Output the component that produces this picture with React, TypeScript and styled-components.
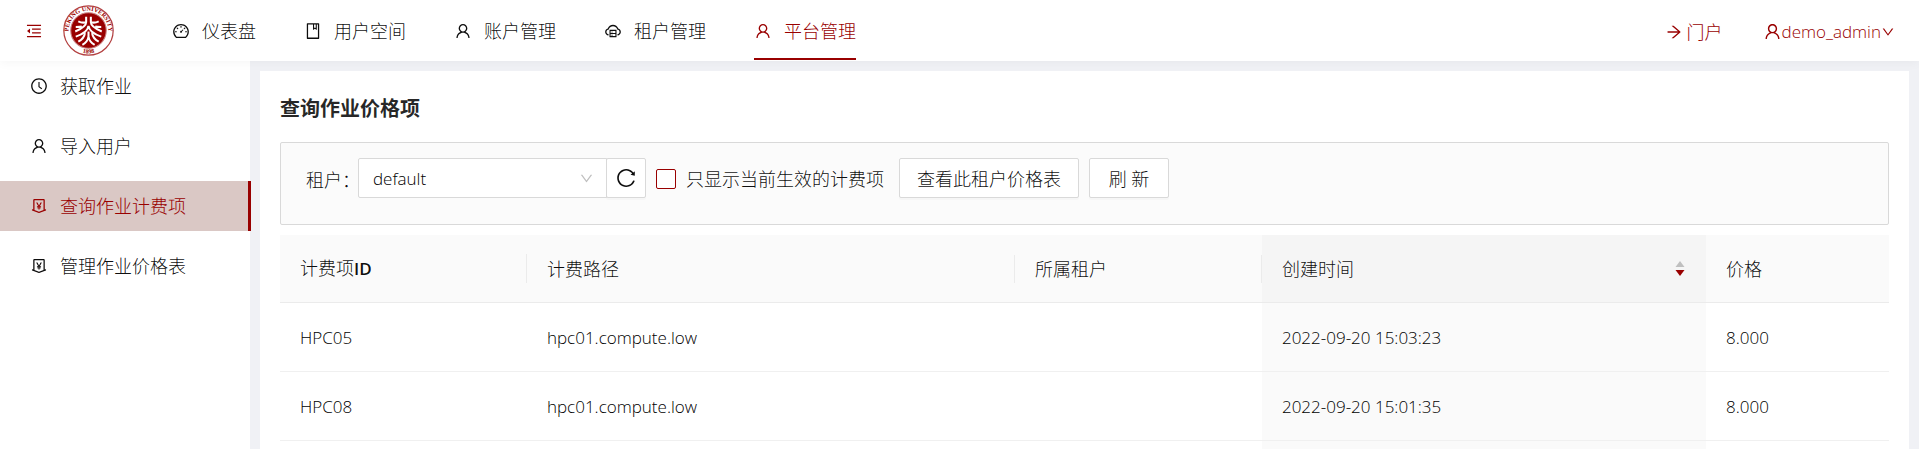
import React from 'react';
import styled, { createGlobalStyle, css } from 'styled-components';
import {
  AiOutlineMenuFold,
  AiOutlineDashboard,
  AiOutlineBook,
  AiOutlineUser,
  AiOutlineCloudServer,
  AiOutlineArrowRight,
  AiOutlineDown,
  AiOutlineClockCircle,
  AiOutlineReload,
  AiOutlineMoneyCollect,
} from 'react-icons/ai';

const brand = '#990000';
const ink = 'rgba(0, 0, 0, 0.95)';
const line = '#d9d9d9';

const GlobalStyle = createGlobalStyle`
  *, *::before, *::after { box-sizing: border-box; }
  body {
    margin: 0;
    color: ${ink};
    background: #f0f1f5;
    font-family: "Open Sans", "Noto Sans CJK SC", sans-serif;
    font-size: 18px;
    font-weight: 300;
    line-height: 28px;
  }
  button, select, input { font: inherit; color: inherit; margin: 0; }
  a { color: inherit; text-decoration: none; }
  svg { flex: none; display: block; }
`;

const Page = styled.div`
  display: flex;
  flex-direction: column;
  height: 100vh;
  overflow: hidden;
`;

const Header = styled.header`
  position: relative;
  z-index: 1;
  display: flex;
  flex: none;
  height: 61px;
  padding: 0 24px 0 25px;
  background: #fff;
  box-shadow: 0 2px 10px rgba(0, 0, 0, 0.04);
`;

const FoldButton = styled.button`
  display: flex;
  align-items: center;
  padding: 0;
  border: 0;
  background: none;
  color: ${brand};
`;

const LogoLink = styled.a`
  display: flex;
  align-items: center;
  margin: 0 34px 0 20px;
`;

const Nav = styled.nav`
  display: flex;
  flex: 1;
`;

const NavItem = styled.a<{ $active?: boolean }>`
  display: flex;
  align-items: center;
  gap: 12px;
  margin: 0 24px;
  padding-top: 4px;
  height: 60px;
  border-bottom: 2px solid ${(p) => (p.$active ? brand : 'transparent')};
  color: ${(p) => (p.$active ? brand : ink)};
`;

const HeaderLinks = styled.div`
  display: flex;
  align-items: center;
  gap: 40px;
  padding-top: 2px;
  color: ${brand};
`;

const PortalLink = styled.a`
  display: flex;
  align-items: center;
  gap: 4px;
`;

const UserButton = styled.button`
  display: flex;
  align-items: center;
  padding: 0;
  border: 0;
  background: none;
  color: ${brand};
  font-size: 17px;
`;

const Body = styled.div`
  display: flex;
  flex: 1;
  min-height: 0;
`;

const Sidebar = styled.aside`
  display: flex;
  flex-direction: column;
  flex: none;
  gap: 10px;
  width: 250px;
  background: #fff;
`;

const SideItem = styled.a<{ $active?: boolean }>`
  display: flex;
  align-items: center;
  gap: 12px;
  height: 50px;
  padding-left: 30px;
  ${(p) =>
    p.$active &&
    css`
      margin-right: -1px;
      color: ${brand};
      background: #dac8c5;
      border-right: 3px solid ${brand};
    `}
`;

const Card = styled.main`
  flex: 1;
  min-width: 0;
  margin: 10px 10px 0;
  padding: 20px 20px 0;
  background: #fff;
  overflow: hidden;
`;

const Title = styled.h1`
  margin: 0 0 16px;
  color: rgba(0, 0, 0, 0.85);
  font-size: 20px;
  font-weight: 700;
  line-height: 35px;
`;

const Filters = styled.form`
  display: flex;
  align-items: flex-start;
  height: 83px;
  margin-bottom: 10px;
  padding: 15px 25px;
  border: 1px solid ${line};
  border-radius: 2px;
  background: #fbfbfb;
`;

const FieldLabel = styled.label`
  width: 52px;
  padding-top: 2px;
  line-height: 40px;
  white-space: nowrap;
`;

const SelectWrap = styled.div`
  display: grid;
  align-items: center;
  width: 249px;
  margin-right: -1px;
  > * { grid-area: 1 / 1; }
  > svg { justify-self: end; margin-right: 13px; color: #bfbfbf; pointer-events: none; }
`;

const Select = styled.select`
  width: 100%;
  height: 40px;
  padding: 2px 14px 0;
  border: 1px solid ${line};
  border-radius: 2px 0 0 2px;
  background: #fff;
  color: #000;
  appearance: none;
  font-size: 17px;
`;

const Button = styled.button<{ $icon?: boolean }>`
  display: flex;
  align-items: center;
  justify-content: center;
  height: 40px;
  min-width: ${(p) => (p.$icon ? '40px' : '80px')};
  padding: ${(p) => (p.$icon ? '0' : '1px 17px 0')};
  border: 1px solid ${line};
  border-radius: 2px;
  background: #fff;
  box-shadow: 0 2px 0 rgba(0, 0, 0, 0.02);
  white-space: nowrap;
`;

const CheckLabel = styled.label`
  display: flex;
  align-items: center;
  gap: 10px;
  height: 40px;
  padding-top: 2px;
  margin: 0 15px 0 10px;
  white-space: nowrap;
`;

const Checkbox = styled.input`
  appearance: none;
  width: 20px;
  height: 20px;
  border: 1px solid ${brand};
  border-radius: 2px;
  background: #fff;
`;

const Actions = styled.div`
  display: flex;
  gap: 10px;
`;

const Table = styled.table`
  width: 100%;
  table-layout: fixed;
  border-collapse: separate;
  border-spacing: 0;
`;

const Col = styled.col<{ $share: number }>`
  width: ${(p) => p.$share}%;
`;

const Th = styled.th<{ $sorted?: boolean }>`
  height: 68px;
  padding: 0 0 0 20px;
  text-align: left;
  font-weight: inherit;
  border-bottom: 1px solid #ebebeb;
  background: ${(p) => (p.$sorted ? '#f5f5f5' : '#fafafa')};
`;

const HeadCell = styled.div<{ $rule?: boolean }>`
  display: flex;
  align-items: center;
  justify-content: space-between;
  padding-right: 20px;
  border-right: 1px solid ${(p) => (p.$rule ? '#ebebeb' : 'transparent')};
`;

const Latin = styled.span`
  font-size: 17px;
  font-weight: 600;
`;

const Td = styled.td<{ $sorted?: boolean }>`
  height: 69px;
  padding: 2px 20px 0;
  color: #000;
  font-size: 17px;
  border-bottom: 1px solid #f0f0f0;
  background: ${(p) => (p.$sorted ? '#fafafa' : '#fff')};
`;

const Logo = () => (
  <svg width="51" height="51" viewBox="0 0 50 50" role="img" aria-label="PKU">
    <defs>
      <path id="ringTop" d="M9.2 36.5 A19.5 19.5 0 1 1 40.8 36.5" />
      <path id="ringBottom" d="M8 40 A23 23 0 0 0 42 40" />
    </defs>
    <circle cx="25" cy="25" r="24.2" fill="#fff" stroke="#b34040" strokeWidth="1.2" />
    <circle cx="25" cy="25" r="17.4" fill="#990000" stroke="#c98080" strokeWidth="1" />
    <g
      fill="#990000"
      fontFamily="Liberation Serif, serif"
      fontWeight="700"
      fontSize="6"
      textAnchor="middle"
    >
      <text>
        <textPath href="#ringTop" startOffset="50%">PEKING UNIVERSITY</textPath>
      </text>
      <text>
        <textPath href="#ringBottom" startOffset="50%">1898</textPath>
      </text>
    </g>
    <g fill="none" stroke="#fff" strokeWidth="2" strokeLinejoin="round">
      <path d="M22.7 11.5 V17 C22.7 20 18 23.5 12 26 M15 16 C18 17.5 20 17.5 22 17 M12.5 21.5 C15 21.5 17 21.5 18.5 21" />
      <path d="M27.3 11.5 V17 C27.3 20 32 23.5 38 26 M35 16 C32 17.5 30 17.5 28 17 M37.5 21.5 C35 21.5 33 21.5 31.5 21" />
      <path d="M25 20.5 C24.5 24.5 20 28.5 12.5 31 M25 20.5 C25.5 24.5 30 28.5 37.5 31" />
      <path d="M21.5 27.5 C21 31 18.5 34 15 36 M28.5 27.5 C29 31 31.5 34 35 36" />
      <path d="M25 26 V31 C24.5 34.5 22.5 37 19 39 M25 31 C25.5 34.5 27.5 37 31 39" />
    </g>
  </svg>
);

const Sorter = () => (
  <svg width="10" height="16" viewBox="0 0 10 16" aria-hidden="true">
    <path d="M5 0 L9.5 6 H0.5 Z" fill="#bfbfbf" />
    <path d="M5 15 L9.5 9 H0.5 Z" fill={brand} />
  </svg>
);

const navItems = [
  { label: '仪表盘', Icon: AiOutlineDashboard },
  { label: '用户空间', Icon: AiOutlineBook },
  { label: '账户管理', Icon: AiOutlineUser },
  { label: '租户管理', Icon: AiOutlineCloudServer },
  { label: '平台管理', Icon: AiOutlineUser, active: true },
];

const sideItems = [
  { label: '获取作业', Icon: AiOutlineClockCircle },
  { label: '导入用户', Icon: AiOutlineUser },
  { label: '查询作业计费项', Icon: AiOutlineMoneyCollect, active: true },
  { label: '管理作业价格表', Icon: AiOutlineMoneyCollect },
];

const rows = [
  ['HPC05', 'hpc01.compute.low', '', '2022-09-20 15:03:23', '8.000'],
  ['HPC08', 'hpc01.compute.low', '', '2022-09-20 15:01:35', '8.000'],
  ['', '', '', '', ''],
];

const shares = [15.35, 30.33, 15.35, 27.6, 11.37];

export default function App() {
  return (
    <>
      <GlobalStyle />
      <Page>
        <Header>
          <FoldButton type="button" aria-label="收起菜单">
            <AiOutlineMenuFold size={18} />
          </FoldButton>
          <LogoLink href="#">
            <Logo />
          </LogoLink>
          <Nav>
            {navItems.map(({ label, Icon, active }) => (
              <NavItem key={label} href="#" $active={active}>
                <Icon size={18} />
                {label}
              </NavItem>
            ))}
          </Nav>
          <HeaderLinks>
            <PortalLink href="#">
              <AiOutlineArrowRight size={18} />
              门户
            </PortalLink>
            <UserButton type="button">
              <AiOutlineUser size={19} />
              demo_admin
              <AiOutlineDown size={14} />
            </UserButton>
          </HeaderLinks>
        </Header>
        <Body>
          <Sidebar>
            {sideItems.map(({ label, Icon, active }) => (
              <SideItem key={label} href="#" $active={active}>
                <Icon size={18} />
                {label}
              </SideItem>
            ))}
          </Sidebar>
          <Card>
            <Title>查询作业价格项</Title>
            <Filters>
              <FieldLabel htmlFor="tenant">租户：</FieldLabel>
              <SelectWrap>
                <Select id="tenant" defaultValue="default">
                  <option value="default">default</option>
                </Select>
                <AiOutlineDown size={15} />
              </SelectWrap>
              <Button type="button" $icon aria-label="刷新租户">
                <AiOutlineReload size={22} />
              </Button>
              <CheckLabel>
                <Checkbox type="checkbox" />
                只显示当前生效的计费项
              </CheckLabel>
              <Actions>
                <Button type="button">查看此租户价格表</Button>
                <Button type="button">刷 新</Button>
              </Actions>
            </Filters>
            <Table>
              <colgroup>
                {shares.map((share, i) => (
                  <Col key={i} $share={share} />
                ))}
              </colgroup>
              <thead>
                <tr>
                  <Th>
                    <HeadCell $rule>
                      <span>计费项<Latin>ID</Latin></span>
                    </HeadCell>
                  </Th>
                  <Th><HeadCell $rule>计费路径</HeadCell></Th>
                  <Th><HeadCell $rule>所属租户</HeadCell></Th>
                  <Th $sorted aria-sort="descending">
                    <HeadCell>创建时间<Sorter /></HeadCell>
                  </Th>
                  <Th><HeadCell>价格</HeadCell></Th>
                </tr>
              </thead>
              <tbody>
                {rows.map((cells, r) => (
                  <tr key={r}>
                    {cells.map((cell, c) => (
                      <Td key={c} $sorted={c === 3}>{cell}</Td>
                    ))}
                  </tr>
                ))}
              </tbody>
            </Table>
          </Card>
        </Body>
      </Page>
    </>
  );
}
